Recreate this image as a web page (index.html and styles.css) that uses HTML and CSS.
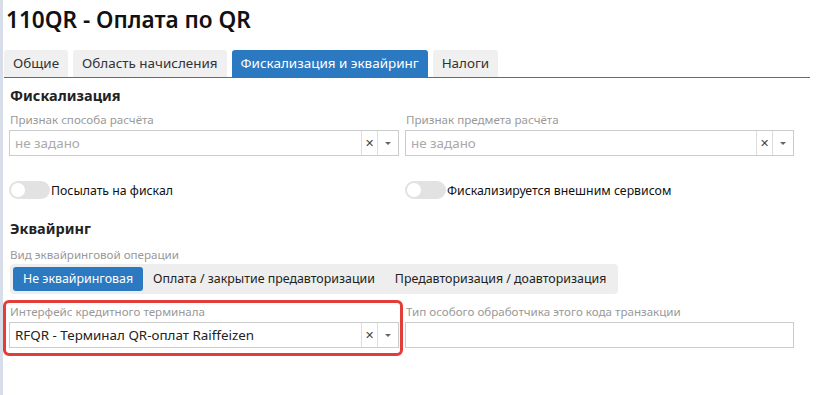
FILE: index.html
```html
<!DOCTYPE html>
<html lang="ru">
<head>
    <meta charset="UTF-8">
    <title>110QR - Оплата по QR</title>
    <link rel="stylesheet" href="styles.css">
</head>
<body>
<div class="page">
    <h1 class="title">110QR - Оплата по QR</h1>

    <div class="tabs">
        <div class="tab">Общие</div>
        <div class="tab">Область начисления</div>
        <div class="tab active">Фискализация и эквайринг</div>
        <div class="tab">Налоги</div>
    </div>

    <div class="content">
        <h2 class="section-title">Фискализация</h2>
        <div class="row">
            <div class="field">
                <label class="field-label">Признак способа расчёта</label>
                <div class="select">
                    <span class="select-value placeholder">не задано</span>
                    <span class="select-clear">&#x2715;</span>
                    <span class="select-caret"></span>
                </div>
            </div>
            <div class="field">
                <label class="field-label">Признак предмета расчёта</label>
                <div class="select">
                    <span class="select-value placeholder">не задано</span>
                    <span class="select-clear">&#x2715;</span>
                    <span class="select-caret"></span>
                </div>
            </div>
        </div>

        <div class="row toggles">
            <label class="toggle">
                <span class="switch"><span class="knob"></span></span>
                <span>Посылать на фискал</span>
            </label>
            <label class="toggle">
                <span class="switch"><span class="knob"></span></span>
                <span>Фискализируется внешним сервисом</span>
            </label>
        </div>

        <h2 class="section-title">Эквайринг</h2>
        <label class="field-label group-label">Вид эквайринговой операции</label>
        <div class="btn-group">
            <span class="btn active">Не эквайринговая</span>
            <span class="btn">Оплата / закрытие предавторизации</span>
            <span class="btn">Предавторизация / доавторизация</span>
        </div>

        <div class="row terminal-row">
            <div class="field highlight">
                <label class="field-label">Интерфейс кредитного терминала</label>
                <div class="select">
                    <span class="select-value">RFQR - Терминал QR-оплат Raiffeizen</span>
                    <span class="select-clear">&#x2715;</span>
                    <span class="select-caret"></span>
                </div>
            </div>
            <div class="field">
                <label class="field-label">Тип особого обработчика этого кода транзакции</label>
                <div class="input"></div>
            </div>
        </div>
    </div>
</div>
</body>
</html>
```

FILE: styles.css
```css
html, body {
    margin: 0;
    height: 100%;
}

body {
    font-family: "Noto Sans", Arial, sans-serif;
    color: #222;
    background: #fff;
}

.page {
    min-height: 100%;
    box-sizing: border-box;
    border-left: 3px solid #d7deea;
    padding-left: 1px;
    width: 810px;
}

.title {
    margin: 0;
    padding: 4px 0 0 2px;
    font-size: 22.6px;
    font-weight: 600;
    line-height: 32px;
    color: #111;
}

.tabs {
    display: flex;
    gap: 5px;
    margin-top: 14px;
    border-bottom: 1px solid #2b79c1;
}

.tab {
    padding: 0 9px;
    height: 27px;
    line-height: 27px;
    font-size: 13.45px;
    color: #333;
    background: #f0f0f0;
    border-radius: 3px 3px 0 0;
}

.tab.active {
    background: #2b79c1;
    color: #fff;
}

.content {
    padding-left: 5px;
    width: 785px;
}

.section-title {
    margin: 7px 0 0 1px;
    font-size: 14.5px;
    font-weight: 700;
    line-height: 20px;
    color: #222;
}

.row {
    display: grid;
    grid-template-columns: 390px 389px;
    gap: 6px;
}

.field-label {
    display: block;
    margin: 6px 0 2px 1px;
    font-size: 11.6px;
    line-height: 17px;
    color: #999;
}

.group-label {
    margin-top: 8px;
    margin-bottom: 1px;
}

.select, .input {
    display: flex;
    align-items: stretch;
    height: 26px;
    box-sizing: border-box;
    border: 1px solid #ccc;
    background: #fff;
}

.select-value {
    flex: 1;
    padding-left: 5px;
    font-size: 13.4px;
    line-height: 24px;
    color: #222;
}

.select-value.placeholder {
    color: #aaa;
}

.select-clear {
    width: 15px;
    border-left: 1px solid #ddd;
    text-align: center;
    font-size: 11px;
    line-height: 24px;
    color: #444;
}

.select-caret {
    width: 20px;
    border-left: 1px solid #ddd;
    position: relative;
}

.select-caret::after {
    content: '';
    position: absolute;
    left: 7px;
    top: 11px;
    border-left: 3px solid transparent;
    border-right: 3px solid transparent;
    border-top: 3px solid #666;
}

.toggles {
    margin-top: 25px;
    margin-bottom: 19px;
}

.toggle {
    display: flex;
    align-items: center;
    gap: 1px;
    font-size: 12.3px;
    color: #111;
}

.switch {
    width: 41px;
    height: 18px;
    border-radius: 9px;
    background: #e2e2e2;
    position: relative;
}

.knob {
    position: absolute;
    left: 2px;
    top: 2px;
    width: 14px;
    height: 14px;
    border-radius: 50%;
    background: #fff;
}

.btn-group {
    display: flex;
    width: fit-content;
    padding: 3px 2px 3px 3px;
    background: #eee;
    border-radius: 4px;
    margin-left: 1px;
}

.btn {
    padding: 0 10px;
    height: 24px;
    line-height: 24px;
    font-size: 12.4px;
    color: #222;
    border-radius: 3px;
}

.btn.active {
    background: #2b79c1;
    color: #fff;
}

.terminal-row {
    margin-top: 3px;
}

.field.highlight {
    position: relative;
}

.field.highlight::after {
    content: '';
    position: absolute;
    left: -6px;
    right: -4px;
    top: 3px;
    bottom: -8px;
    border: 3px solid #e23d36;
    border-radius: 6px;
}
```
